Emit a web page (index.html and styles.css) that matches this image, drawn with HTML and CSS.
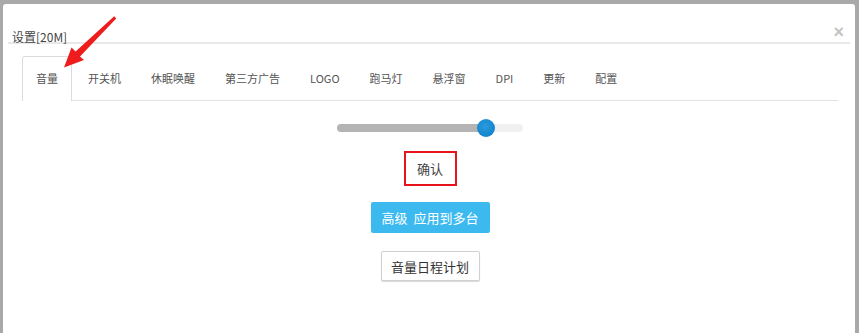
FILE: index.html
```html
<!DOCTYPE html>
<html>
<head>
    <meta charset="UTF-8">
    <title>设置</title>
    <link rel="stylesheet" href="styles.css">
</head>
<body>
    <div class="modal">
        <div class="modal-header">
            <span class="close">×</span>
            <span class="title">设置[20M]</span>
        </div>
        <div class="modal-body">
            <ul class="tabs">
                <li class="active">音量</li>
                <li>开关机</li>
                <li>休眠唤醒</li>
                <li>第三方广告</li>
                <li>LOGO</li>
                <li>跑马灯</li>
                <li>悬浮窗</li>
                <li>DPI</li>
                <li>更新</li>
                <li>配置</li>
            </ul>

            <div class="volume">
                <div class="slider">
                    <div class="slider-fill" style="width: 149px"></div>
                    <div class="slider-thumb" style="left: 140px"></div>
                </div>
                <button class="btn btn-confirm">确认</button>
                <button class="btn btn-primary">高级&nbsp; 应用到多台</button>
                <button class="btn btn-default">音量日程计划</button>
            </div>
        </div>
    </div>

    <!-- annotation arrow pointing at the active tab -->
    <svg class="arrow" width="859" height="333" viewBox="0 0 859 333">
        <polygon points="114.2,16.2 116.2,18.6 80,56.5 84,60 64,67.5 71.5,47.5 75.6,51.6" fill="#ee1c1c"/>
    </svg>
</body>
</html>
```

FILE: styles.css
```css
body { margin: 0; background: #a9a9a9; font-family: "Noto Sans CJK SC", "Liberation Sans", sans-serif; overflow: hidden; height: 333px; position: relative; }
.modal { margin: 4px 4px 0 3px; background: #fff; border-radius: 3px 3px 0 0; height: 340px; }
.modal-header { margin: 0 5px; padding: 19px 0 3px 4px; border-bottom: 2px solid #e8e8e8; height: 16px; }
.title { font-size: 12px; line-height: 16px; color: #444; }
.close { float: right; margin-right: 6px; margin-top: 1px; font-size: 18px; line-height: 16px; font-weight: bold; color: #c4c4c4; font-family: "Liberation Sans", sans-serif; }
.modal-body { padding: 12px 17px 0 19px; }
.tabs { display: flex; list-style: none; margin: 0; padding: 0; border-bottom: 1px solid #e2e2e2; }
.tabs li { padding: 0 13px; height: 43px; line-height: 43px; font-size: 11px; color: #555; border: 1px solid transparent; border-bottom: none; margin-right: 2px; margin-bottom: -1px; }
.tabs li.active { border-color: #dcdcdc; background: #fff; border-radius: 3px 3px 0 0; height: 44px; }
.volume { display: flex; flex-direction: column; align-items: center; padding-top: 23px; }
.slider { position: relative; width: 186px; height: 8px; border-radius: 4px; background: #f0f0f0; }
.slider-fill { height: 8px; border-radius: 4px; background: #b4b4b4; }
.slider-thumb { position: absolute; top: -5px; width: 18px; height: 18px; border-radius: 50%; background: radial-gradient(circle at 45% 40%, #2a9be0, #0b7cc4); }
.btn { font-family: "Noto Sans CJK SC", "Liberation Sans", sans-serif; font-size: 13px; cursor: pointer; box-sizing: border-box; padding: 0; }
.btn-confirm { margin-top: 19px; width: 53px; height: 35px; border: 2px solid #e8141b; background: #fff; color: #444; }
.btn-primary { margin-top: 16px; width: 119px; height: 31px; border: none; border-radius: 2px; background: #3cbaf0; color: #fff; }
.btn-default { margin-top: 18px; width: 99px; height: 30px; border: 1px solid #d0d0d0; border-radius: 2px; background: #fff; color: #333; box-shadow: 0 1px 1px rgba(0,0,0,0.15); }
.arrow { position: absolute; left: 0; top: 0; }
```
